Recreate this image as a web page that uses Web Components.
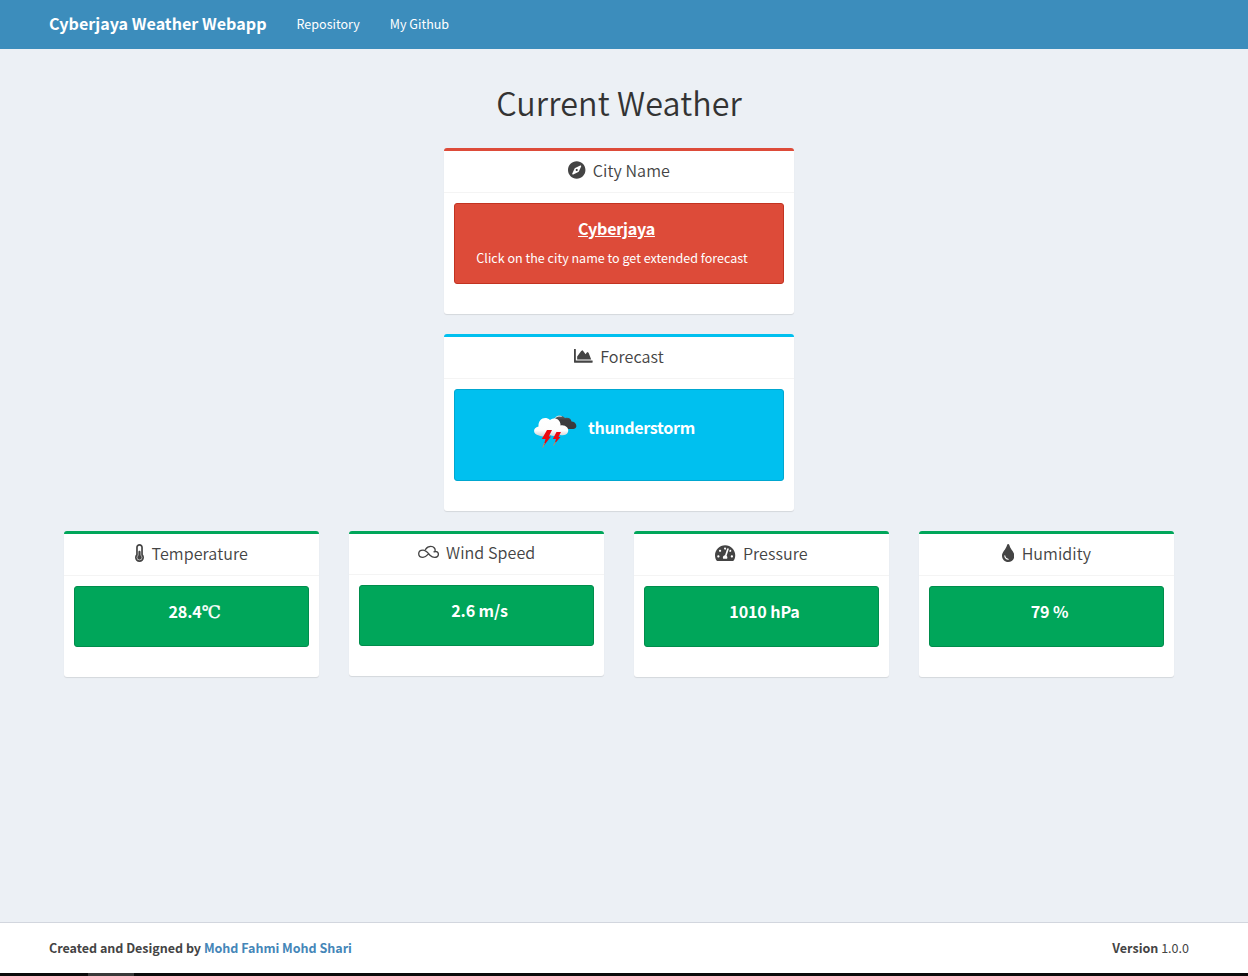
<!DOCTYPE html>
<html lang="en">
<head>
<meta charset="utf-8">
<title>Cyberjaya Weather Webapp</title>
<style>
html, body { margin: 0; height: 100%; }
body { font-family: "Noto Sans CJK SC", "Noto Sans", sans-serif; font-size: 12.54px; color: #333; background: #ecf0f5; overflow: hidden; }
</style>
</head>
<body>
<weather-app></weather-app>
<script>
const define = (name, html) => {
  const template = document.createElement('template');
  template.innerHTML = html;
  customElements.define(name, class extends HTMLElement {
    constructor() {
      super();
      this.attachShadow({ mode: 'open' }).append(template.content.cloneNode(true));
    }
  });
};

const glyphs = {
  compass: [496, 512, '<path d="M225.38 233.37c-12.5 12.5-12.5 32.76 0 45.25 12.49 12.5 32.76 12.5 45.25 0 12.5-12.5 12.5-32.76 0-45.25-12.5-12.49-32.76-12.49-45.25 0zM248 8C111.03 8 0 119.03 0 256s111.03 248 248 248 248-111.03 248-248S384.97 8 248 8zm126.14 148.05L308.17 300.4a31.938 31.938 0 0 1-15.77 15.77l-144.34 65.97c-16.65 7.61-33.81-9.55-26.2-26.2l65.98-144.35a31.938 31.938 0 0 1 15.77-15.77l144.34-65.97c16.65-7.6 33.8 9.55 26.19 26.2z"/>'],
  area: [530, 512, '<path d="M518 384c6.600 0 12 5.400 12 12v40c0 6.600-5.400 12-12 12H12c-6.600 0-12-5.400-12-12V70c0-6.600 5.400-12 12-12h28c6.600 0 12 5.400 12 12v314h466zM415 165L375 145L330 205L245 95L205 115L90 270v86h400z"/>'],
  thermometer: [256, 512, '<path d="M192 384c0 35.346-28.654 64-64 64s-64-28.654-64-64c0-23.685 12.876-44.349 32-55.417V224c0-17.673 14.327-32 32-32s32 14.327 32 32v104.583c19.124 11.068 32 31.732 32 55.417zm32-84.653c19.912 22.563 32 52.194 32 84.653 0 70.696-57.303 128-128 128-.299 0-.609-.001-.909-.003C56.789 511.509-.357 453.636.002 383.333.166 351.135 12.225 321.755 32 299.347V96c0-53.019 42.981-96 96-96s96 42.981 96 96v203.347zM208 384c0-34.339-19.37-52.19-32-66.502V96c0-26.467-21.533-48-48-48S80 69.533 80 96v221.498c-12.732 14.428-31.825 32.1-31.999 66.08-.224 43.876 35.563 80.116 79.423 80.42L128 464c44.112 0 80-35.888 80-80z"/>'],
  wind: [600, 512, '<path fill="none" stroke="currentColor" stroke-width="38" stroke-linecap="round" stroke-linejoin="round" d="M285 325C240 375 200 408 142 408C70 408 20 366 20 306C20 246 70 204 142 204C240 204 290 296 350 356C385 391 420 408 470 408C535 408 580 371 580 318C580 261 530 225 455 252M482 232C505 176 455 96 365 96C290 96 250 126 215 180"/>'],
  gauge: [576, 512, '<path d="M288 32C128.94 32 0 160.94 0 320c0 52.8 14.25 102.26 39.06 144.8 5.61 9.62 16.3 15.2 27.44 15.2h443c11.14 0 21.83-5.58 27.44-15.2C561.75 422.26 576 372.8 576 320c0-159.06-128.94-288-288-288zm0 64c14.71 0 26.58 10.13 30.32 23.65-1.11 2.26-2.64 4.23-3.45 6.67l-9.22 27.67c-5.13 3.49-10.97 6.01-17.64 6.01-17.67 0-32-14.33-32-32S270.33 96 288 96zM96 384c-17.67 0-32-14.33-32-32s14.33-32 32-32 32 14.33 32 32-14.33 32-32 32zm48-160c-17.67 0-32-14.33-32-32s14.33-32 32-32 32 14.33 32 32-14.33 32-32 32zm246.77-72.41l-61.33 184C343.13 347.33 352 364.54 352 384c0 11.72-3.38 22.55-8.88 32H232.88c-5.5-9.45-8.88-20.28-8.88-32 0-33.94 26.5-61.43 59.9-63.59l61.34-184.01c4.17-12.56 17.73-19.45 30.36-15.17 12.57 4.19 19.35 17.79 15.17 30.36zm14.66 57.2l15.52-46.55c3.47-1.29 7.13-2.23 11.05-2.23 17.67 0 32 14.33 32 32s-14.33 32-32 32c-11.38-.01-21.25-6.1-26.57-15.22zM480 384c-17.67 0-32-14.33-32-32s14.33-32 32-32 32 14.33 32 32-14.33 32-32 32z"/>'],
  drop: [352, 512, '<path d="M205.22 22.09c-7.94-28.78-49.44-30.12-58.44 0C100.01 179.85 0 222.72 0 333.91 0 432.35 78.72 512 176 512s176-79.65 176-178.09c0-111.75-99.79-153.34-146.78-311.82zM176 448c-61.75 0-112-50.25-112-112 0-8.84 7.16-16 16-16s16 7.16 16 16c0 44.11 35.89 80 80 80 8.84 0 16 7.16 16 16s-7.16 16-16 16z"/>']
};
customElements.define('glyph-icon', class extends HTMLElement {
  constructor() {
    super();
    this.attachShadow({ mode: 'open' });
  }
  connectedCallback() {
    const [w, h, body] = glyphs[this.getAttribute('name')];
    this.shadowRoot.innerHTML = `<style>:host{display:block;line-height:0}svg{display:block;height:18px;width:${(w / h * 18).toFixed(2)}px;fill:currentColor}</style><svg viewBox="0 0 ${w} ${h}">${body}</svg>`;
  }
});

define('storm-picture', `
<style>:host{display:block;width:50px;height:50px}svg{display:block}</style>
<svg width="50" height="50" viewBox="0 0 50 50">
  <defs>
    <linearGradient id="dark" x2="0" y2="1"><stop stop-color="#666"/><stop offset=".35" stop-color="#3c3c3e"/><stop offset="1" stop-color="#3a3a3c"/></linearGradient>
    <linearGradient id="light" x2="0" y2="1"><stop stop-color="#fff"/><stop offset=".68" stop-color="#fdfdfd"/><stop offset="1" stop-color="#cfcfd2"/></linearGradient>
  </defs>
  <path fill="url(#dark)" d="M24 15.500C24 10 31 7.500 35 12C39 11 41 13 41.500 15.500C46.500 15.500 48.500 22.500 43.500 23H30C24 22.500 21 19 24 15.500Z"/>
  <path fill="none" stroke="#e8f4f8" stroke-width="1" d="M24 14C25.500 10.500 28.500 9.500 31.500 10.500"/>
  <path fill="url(#light)" d="M9 29.500C2.500 28.500 2.500 21.500 8.500 20.500C8 13 15 9.500 20 14C26 10 31 14.500 30.500 19.500C35 18.500 39.500 22 38 26C37 29.500 33 29.500 30 29C26 31 22 30 20 29C17 31 12 31 9 29.500Z"/>
  <path fill="#ec0a10" d="M17 24H22L18.800 30.500H21L13.500 40L15.500 33H11.800ZM26.500 26H31L28.500 31H30.500L24.500 38L26 33H22.800Z"/>
  <path stroke="#c58a63" stroke-width="1" d="M14.500 37L12.800 41.500M25.500 36L23.500 39.500"/>
</svg>`);

define('nav-bar', `
<style>
:host{display:flex;height:49px;flex:none;background:#3c8dbc;color:#fff;align-items:center;padding:0 0 2px 49px;box-sizing:border-box;line-height:20px}
.brand{font-size:16.12px;font-weight:700;margin:-1px 30px 0 0}
a{color:#fff;margin-right:30px}
</style>
<span class="brand"><slot name="brand"></slot></span><a>Repository</a><a>My Github</a>`);

define('info-card', `
<style>
:host{display:block;box-sizing:border-box;background:#fff;border-top:3px solid var(--edge,#00a65a);border-radius:3px;box-shadow:0 1px 1px rgba(0,0,0,.1)}
header{box-sizing:border-box;height:var(--head,42px);padding-bottom:4px;border-bottom:1px solid #f4f4f4;display:flex;justify-content:center;align-items:center;gap:7.3px;color:#444}
.title{font-size:16.12px;font-weight:350;line-height:20px;letter-spacing:.06px}
.body{padding:10px 10px 30px}
.callout{box-sizing:border-box;height:var(--box,61px);background:var(--fill,#00a65a);border:1px solid var(--line,#008d4c);border-radius:3px;color:#fff;padding:14px 0 0 6px;text-align:center;font-size:16.12px;font-weight:700;line-height:20px;letter-spacing:-.15px}
</style>
<header><slot name="icon"></slot><span class="title"><slot name="title"></slot></span></header>
<div class="body"><div class="callout"><slot></slot></div></div>`);

define('page-footer', `
<style>
:host{display:block;flex:none}
.row{height:50px;border-top:1px solid #d2d6de;background:#fff;display:flex;justify-content:space-between;align-items:center;padding:0 59px 0 49px;color:#444;line-height:20px}
b{font-weight:700}.credit{letter-spacing:-.02px}.name{color:#4486b8}
.strip{height:3px;background:#0b0b0b;padding-left:88px}
.strip i{display:block;width:46px;height:3px;background:#393939}
</style>
<div class="row"><b class="credit">Created and Designed by <span class="name">Mohd Fahmi Mohd Shari</span></b><span><b>Version</b> 1.0.0</span></div>
<div class="strip"><i></i></div>`);

define('weather-app', `
<style>
:host{display:flex;flex-direction:column;height:976px}
main{flex:1;width:1110px;margin-left:64px}
h1{font-size:32.24px;font-weight:350;line-height:40px;letter-spacing:.12px;text-align:center;margin:33px 0 26px;color:#333}
.wide{width:350px;margin:0 auto 20px}
.red{--edge:#dd4b39;--fill:#dd4b39;--line:#c23321;--box:81px}
.blue{--edge:#00c0ef;--fill:#00c0ef;--line:#00a7d0;--box:92px}
.low{--head:41px}
.grid{display:grid;grid-template-columns:repeat(4,255px);gap:30px;align-items:start}
.city{text-decoration:underline;display:block;margin-right:11px;letter-spacing:-.25px}
.hint{display:block;font-size:12.54px;font-weight:400;letter-spacing:0;margin:10px 20px 0 0}
.storm{display:flex;align-items:center;margin:2px 0 0 69px;gap:8px}
.storm span{margin-bottom:8px;letter-spacing:-.35px}
.deg{font-family:"Liberation Serif","DejaVu Serif",serif;font-size:17px;font-weight:400;line-height:1;-webkit-text-stroke:.4px #fff}
</style>
<nav-bar><span slot="brand">Cyberjaya Weather Webapp</span></nav-bar>
<main>
  <h1>Current Weather</h1>
  <info-card class="wide red"><glyph-icon slot="icon" name="compass"></glyph-icon><span slot="title">City Name</span><span class="city">Cyberjaya</span><span class="hint">Click on the city name to get extended forecast</span></info-card>
  <info-card class="wide blue"><glyph-icon slot="icon" name="area"></glyph-icon><span slot="title">Forecast</span><div class="storm"><storm-picture></storm-picture><span>thunderstorm</span></div></info-card>
  <div class="grid">
    <info-card><glyph-icon slot="icon" name="thermometer"></glyph-icon><span slot="title">Temperature</span>28.4<span class="deg">℃</span></info-card>
    <info-card class="low"><glyph-icon slot="icon" name="wind"></glyph-icon><span slot="title">Wind Speed</span>2.6 m/s</info-card>
    <info-card><glyph-icon slot="icon" name="gauge"></glyph-icon><span slot="title">Pressure</span>1010 hPa</info-card>
    <info-card><glyph-icon slot="icon" name="drop"></glyph-icon><span slot="title">Humidity</span>79 %</info-card>
  </div>
</main>
<page-footer></page-footer>`);
</script>
</body>
</html>
